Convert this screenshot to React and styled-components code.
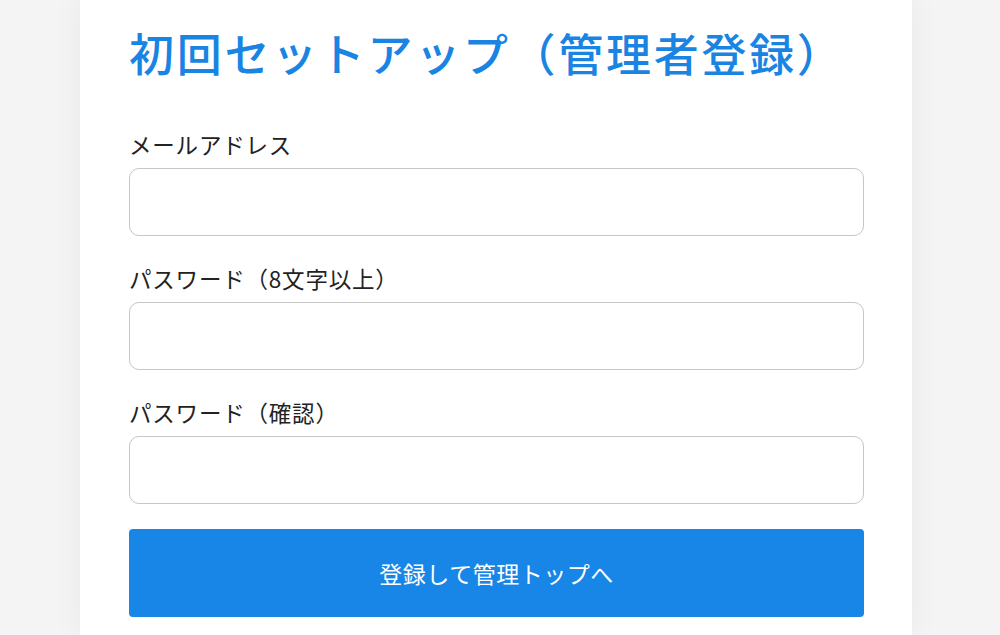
import React from "react";
import styled, { createGlobalStyle } from "styled-components";

const GlobalStyle = createGlobalStyle`
  html, body {
    margin: 0;
    padding: 0;
    background: #f4f4f4;
    font-family: "Noto Sans CJK JP", "Noto Sans", sans-serif;
  }
  * { box-sizing: border-box; }
`;

const Page = styled.div`
  display: flex;
  padding-left: 80px;
  height: 635px;
  overflow: hidden;
`;

const Card = styled.main`
  width: 832px;
  background: #ffffff;
  box-shadow: 0 0 30px rgba(0, 0, 0, 0.05);
  padding: 22px 48px 0 49px;
  display: flex;
  flex-direction: column;
`;

const Title = styled.h1`
  margin: 0 0 43px;
  font-size: 45px;
  line-height: 62px;
  font-weight: 500;
  color: #1a84e3;
  letter-spacing: 2.7px;
  white-space: nowrap;
`;

const Form = styled.form`
  display: flex;
  flex-direction: column;
`;

const Field = styled.div`
  display: flex;
  flex-direction: column;
  gap: 7px;
  margin-bottom: ${(p) => p.$mb}px;
`;

const Label = styled.label`
  font-size: 22.5px;
  line-height: 34px;
  color: #222;
  font-weight: 400;
  letter-spacing: 0.8px;
`;

const Input = styled.input`
  height: 68px;
  width: 100%;
  border: 1.5px solid #c6c6c6;
  border-radius: 10px;
  background: #fff;
  font-size: 22px;
  padding: 0 16px;
  outline: none;
`;

const Button = styled.button`
  height: 88px;
  width: 100%;
  border: none;
  border-radius: 4px;
  background: #1786e6;
  color: #fff;
  font-family: inherit;
  font-size: 23px;
  letter-spacing: 0.5px;
  cursor: pointer;
`;

export default function App() {
  return (
    <>
      <GlobalStyle />
      <Page>
        <Card>
          <Title>初回セットアップ（管理者登録）</Title>
          <Form onSubmit={(e) => e.preventDefault()}>
            <Field $mb={25}>
              <Label>メールアドレス</Label>
              <Input type="email" />
            </Field>
            <Field $mb={25}>
              <Label>パスワード（8文字以上）</Label>
              <Input type="password" />
            </Field>
            <Field $mb={25}>
              <Label>パスワード（確認）</Label>
              <Input type="password" />
            </Field>
            <Button type="submit">登録して管理トップへ</Button>
          </Form>
        </Card>
      </Page>
    </>
  );
}
